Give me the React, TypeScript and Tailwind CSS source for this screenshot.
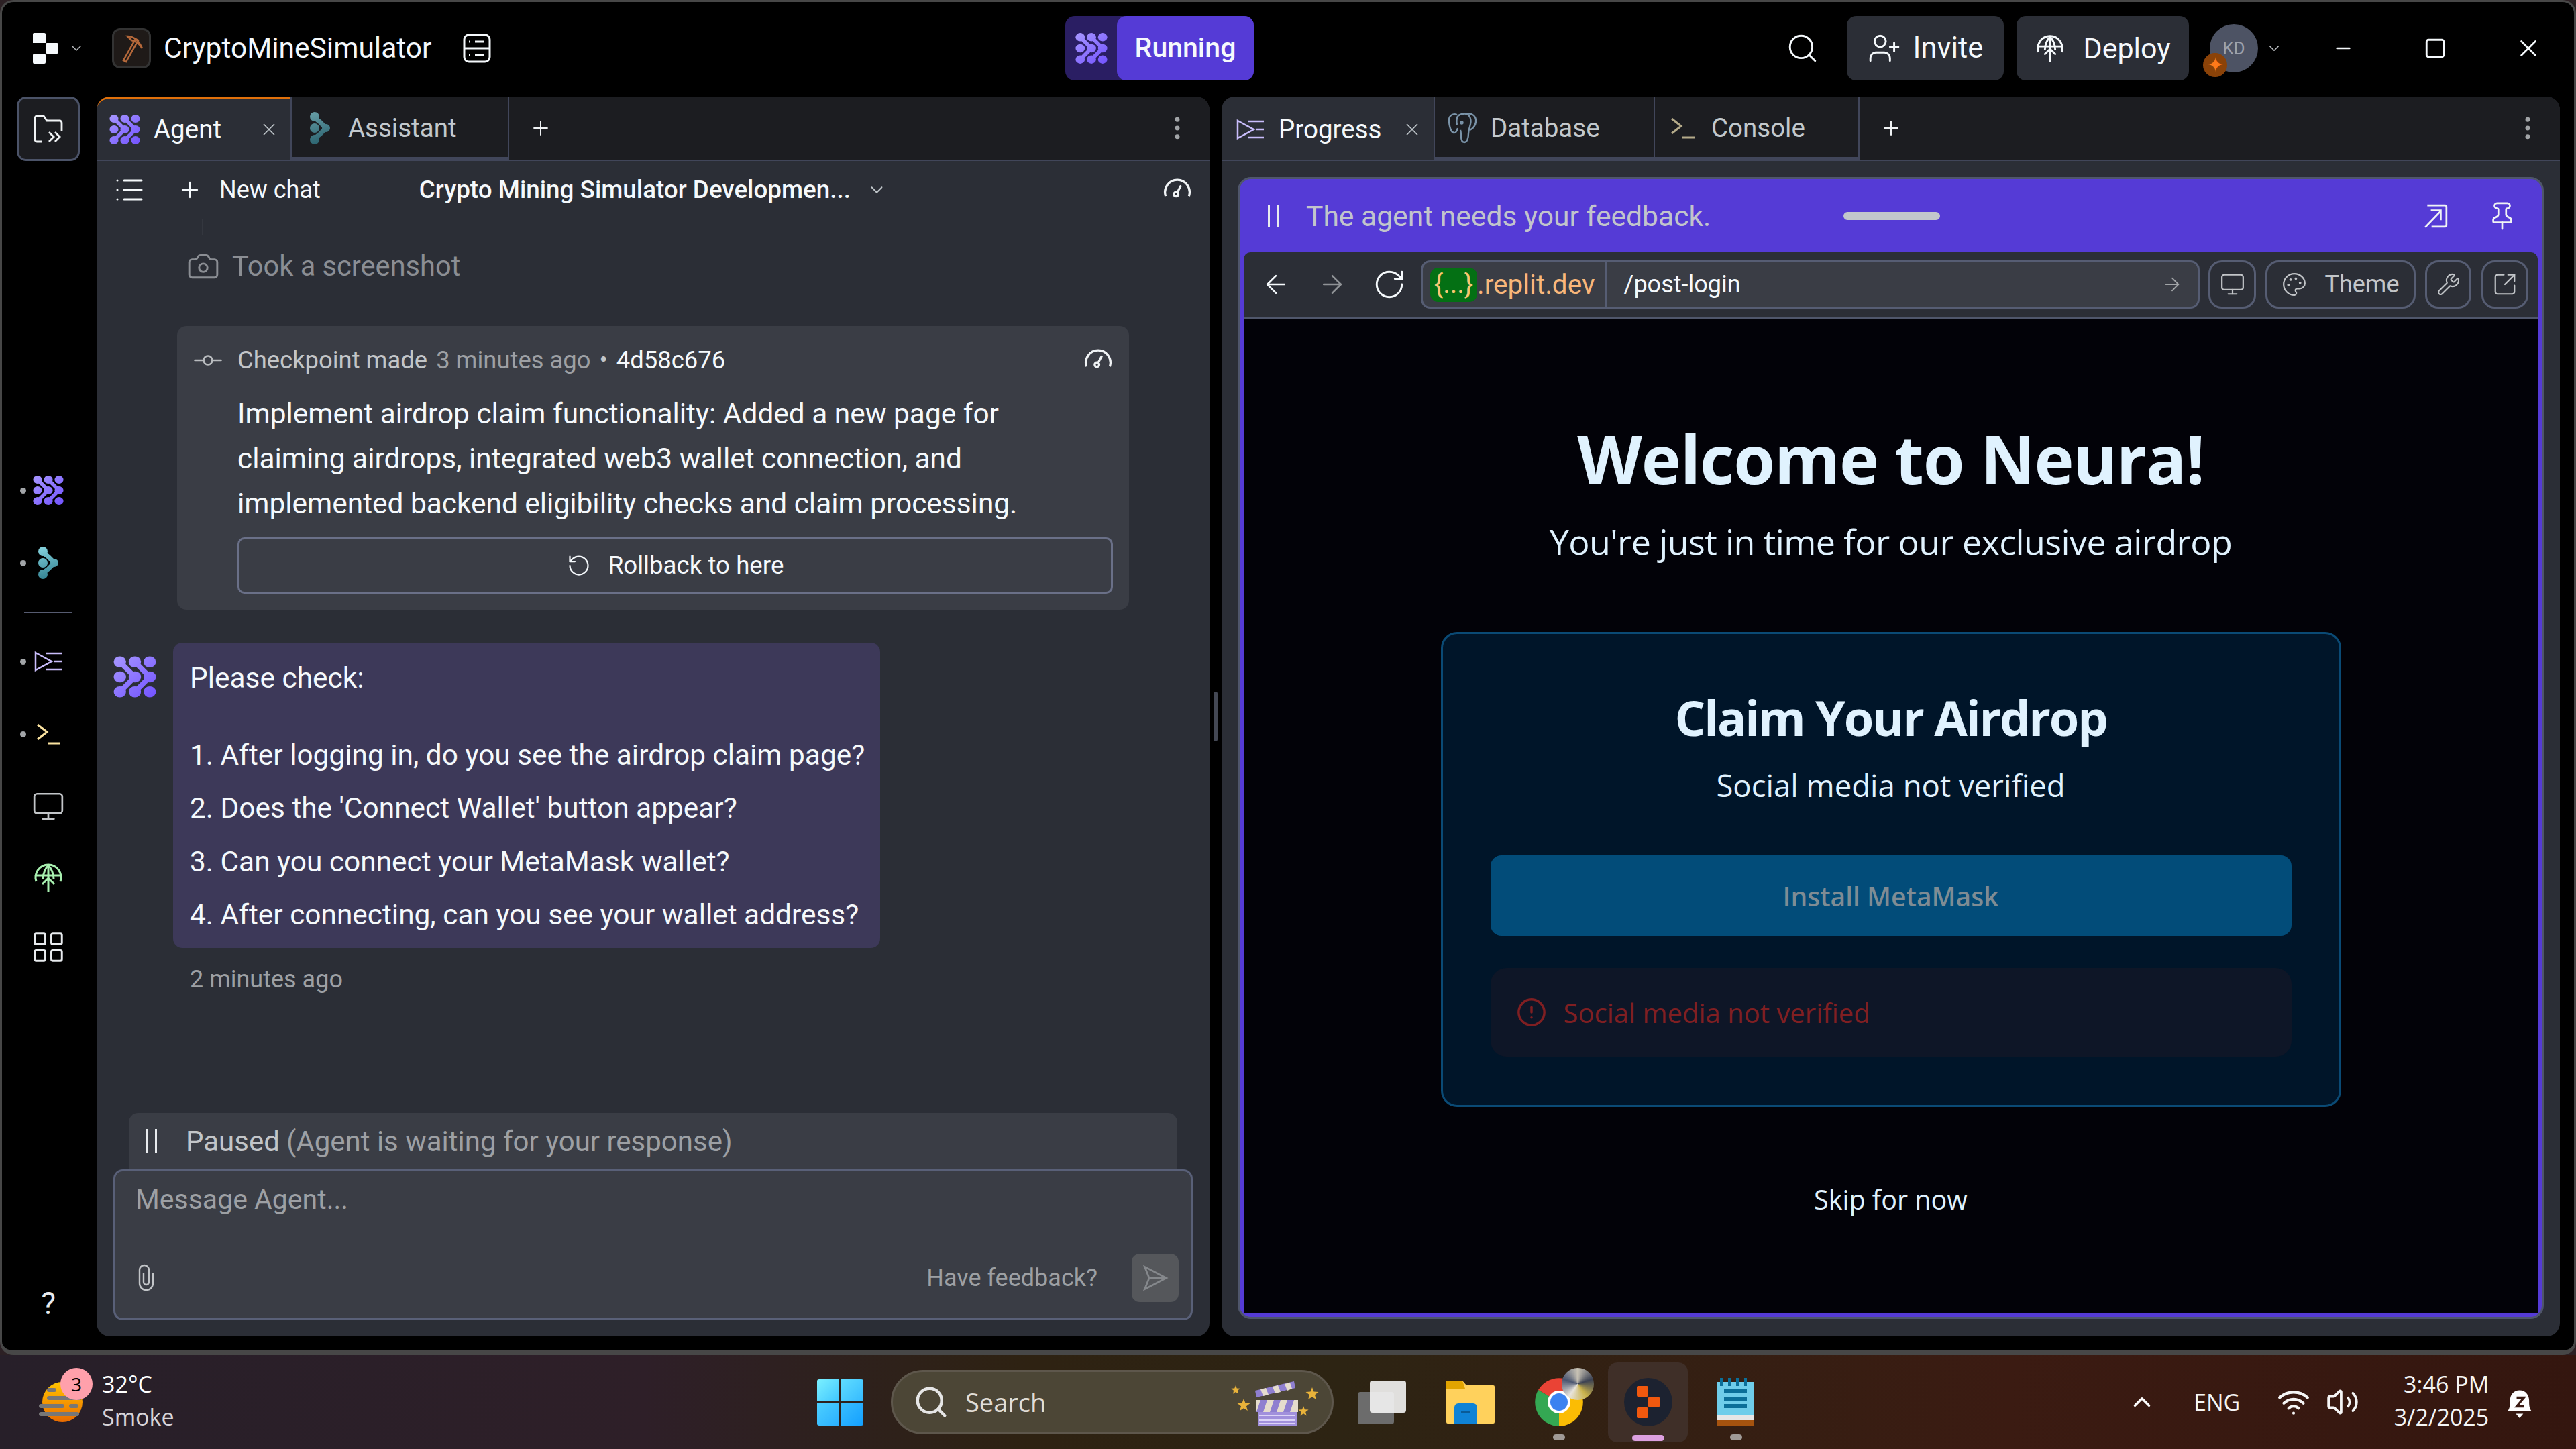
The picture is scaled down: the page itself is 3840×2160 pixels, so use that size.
import {
  ArrowLeft,
  ArrowRight,
  Camera,
  ChevronDown,
  ChevronUp,
  CircleAlert,
  EllipsisVertical,
  GitCommitHorizontal,
  List,
  Minus,
  Monitor,
  Palette,
  Plus,
  RotateCcw,
  RotateCw,
  Search,
  Square,
  SquareArrowOutUpRight,
  UserPlus,
  Volume2,
  Wifi,
  Wrench,
  X,
  Pin,
  LayoutGrid,
} from 'lucide-react';

function AgentLogo({ id, w, h }: { id: string; w: number; h: number }) {
  const grad = `url(#${id})`;
  return (
    <svg width={w} height={h} viewBox="0 0 46 46" preserveAspectRatio="none">
      <defs>
        <linearGradient id={id} gradientUnits="userSpaceOnUse" x1="5" y1="2" x2="42" y2="44">
          <stop offset="0" stopColor="#a493ff" />
          <stop offset="1" stopColor="#7556ff" />
        </linearGradient>
      </defs>
      <g fill={grad}>
        <ellipse cx="7" cy="7" rx="6.6" ry="6" />
        <ellipse cx="23" cy="7" rx="6.6" ry="6" />
        <ellipse cx="39" cy="7" rx="6.6" ry="6" />
        <ellipse cx="7" cy="23" rx="6.6" ry="6" />
        <ellipse cx="23" cy="23" rx="6.6" ry="6" />
        <ellipse cx="39" cy="23" rx="6.6" ry="6" />
        <ellipse cx="7" cy="39" rx="6.6" ry="6" />
        <ellipse cx="23" cy="39" rx="6.6" ry="6" />
        <ellipse cx="39" cy="39" rx="6.6" ry="6" />
      </g>
      <g fill="none" stroke={grad} strokeWidth="5.5">
        <path d="M7 7 L23 23 L7 39" />
        <path d="M23 7 L39 23 L23 39" />
      </g>
    </svg>
  );
}

function AssistantLogo({ id, w, h, dim }: { id: string; w: number; h: number; dim?: boolean }) {
  const grad = `url(#${id})`;
  return (
    <svg width={w} height={h} viewBox="0 0 30 48" className={dim ? 'opacity-70' : ''}>
      <defs>
        <linearGradient id={id} gradientUnits="userSpaceOnUse" x1="5" y1="0" x2="20" y2="48">
          <stop offset="0" stopColor="#86d3de" />
          <stop offset="1" stopColor="#2f7f8f" />
        </linearGradient>
      </defs>
      <circle cx="7" cy="7" r="7" fill={grad} />
      <circle cx="7" cy="41" r="7" fill={grad} />
      <circle cx="7" cy="24" r="7" fill={grad} />
      <circle cx="24" cy="24" r="6" fill={grad} />
      <path d="M7 7 Q10 12 15 15 L24 24 L15 33 Q10 36 7 41" fill="none" stroke={grad} strokeWidth="7" />
    </svg>
  );
}

function ProgressIcon({ w, h }: { w: number; h: number }) {
  return (
    <svg width={w} height={h} viewBox="0 0 42 30" fill="none" stroke="#c9bdfb" strokeWidth="2.5">
      <path d="M2 2 L26 15 L2 28 Z" />
      <path d="M18 3h23M30 15h11M18 27h23" />
    </svg>
  );
}

function ConsoleIcon({ w, h, color }: { w: number; h: number; color: string }) {
  return (
    <svg width={w} height={h} viewBox="0 0 36 32" fill="none" stroke={color} strokeWidth="3">
      <path d="M2 2 L16 13 L2 24" />
      <path d="M18 30h18" />
    </svg>
  );
}

function DeployIcon({ size, color }: { size: number; color: string }) {
  return (
    <svg width={size} height={size} viewBox="0 0 24 24" fill="none" stroke={color} strokeWidth="1.5">
      <path d="M3 15a9.5 9.5 0 1 1 18 0" />
      <path d="M3 10.5h18" />
      <path d="M8 13c0-4 2-8 4-10 2 2 4 6 4 10" />
      <path d="M12 3v20M7.5 17l4.5-4.5 4.5 4.5" />
    </svg>
  );
}

function Gauge({ size }: { size: number }) {
  return (
    <svg width={size} height={size} viewBox="0 0 24 24" fill="none" stroke="#f0f3f5" strokeWidth="1.8">
      <path d="M2.5 17a10 10 0 1 1 19 0" />
      <circle cx="11" cy="15.5" r="1.8" />
      <path d="M12 14l3-5.5" />
    </svg>
  );
}

function ReplitMark({ w, h }: { w: number; h: number }) {
  return (
    <svg width={w} height={h} viewBox="0 0 38 46" fill="#f5f9fc">
      <rect x="0" y="0" width="19" height="15" rx="2" />
      <rect x="19" y="15" width="19" height="16" rx="2" />
      <rect x="0" y="31" width="19" height="15" rx="2" />
      <rect x="0" y="14" width="19" height="1" />
    </svg>
  );
}

function FilesIcon() {
  return (
    <svg width="44" height="42" viewBox="0 0 44 42" fill="none" stroke="#f0f3f5" strokeWidth="2.8">
      <path d="M12 40H5a3 3 0 0 1-3-3V5a3 3 0 0 1 3-3h10l5 7h19a3 3 0 0 1 3 3v13" />
      <path d="M23 26l7 7-7 7M32 26l7 7-7 7" />
    </svg>
  );
}

function Elephant() {
  return (
    <svg width="48" height="48" viewBox="0 0 46 48" fill="none" stroke="#7a93a8" strokeWidth="2.4">
      <path d="M15 4C7 1 2 7 3 15c1 8 3 15 7 16 3 1 5-3 6-7" />
      <path d="M30 3c8-2 14 4 13 12-1 7-5 10-9 12" />
      <path d="M16 6c4-3 10-4 14-3 6 4 6 11 5 15-1 5-3 9-3 14 0 7-2 13-6 13-3 0-5-3-5-9 0-3 0-6-1-9" />
      <path d="M16 6c-2 5-2 9-1 13" />
      <circle cx="22" cy="16" r="1.5" />
    </svg>
  );
}

function PaperClip() {
  return (
    <svg width="32" height="44" viewBox="0 0 32 44" fill="none" stroke="#c2c5c8" strokeWidth="2.4">
      <path d="M12 14v14a4 4 0 0 0 8 0V10a7 7 0 0 0-14 0v20a10 10 0 0 0 20 0V14" />
    </svg>
  );
}

function SendPlane() {
  return (
    <svg width="40" height="40" viewBox="0 0 36 36" fill="none" stroke="#85888c" strokeWidth="2.4">
      <path d="M4 3 L33 18 L4 33 L10 18 Z" />
      <path d="M10 18h23" />
    </svg>
  );
}

function PopOut() {
  return (
    <svg width="38" height="38" viewBox="0 0 36 36" fill="none" stroke="#f0f3f5" strokeWidth="2.6">
      <path d="M6 3h25a2 2 0 0 1 2 2v26a2 2 0 0 1-2 2H12" />
      <path d="M3 34L25 11M11 10h14v14" />
    </svg>
  );
}

function Star({ x, y, r }: { x: number; y: number; r: number }) {
  const points = Array.from({ length: 10 }, (_, i) => {
    const a = (i * Math.PI) / 5 - Math.PI / 2;
    const rr = i % 2 === 0 ? r : r * 0.42;
    return `${x + rr * Math.cos(a)},${y + rr * Math.sin(a)}`;
  }).join(' ');
  return <polygon points={points} fill="#e8b23a" />;
}

function Clapper() {
  return (
    <svg width="136" height="70" viewBox="0 0 136 70">
      <Star x={7} y={17} r={7} />
      <Star x={19} y={40} r={10} />
      <Star x={121} y={23} r={10} />
      <Star x={108} y={49} r={8} />
      <path d="M36 18 L94 4 L96 14 L38 28 Z" fill="#8f7fd0" />
      <path d="M44 16 L52 14 L56 24 L48 26 Z M62 12 L70 10 L74 20 L66 22 Z M80 8 L88 6 L91 15 L84 18 Z" fill="#e5dccd" />
      <rect x="38" y="32" width="62" height="18" fill="#e5dccd" />
      <path d="M44 32h10l-6 18H38zM64 32h10l-6 18H58zM84 32h10l-6 18H78z" fill="#8f7fd0" />
      <rect x="40" y="50" width="58" height="20" fill="#a190dc" />
      <path d="M42 55h54M42 62h54M42 67h54" stroke="#efeaff" strokeWidth="1.5" />
    </svg>
  );
}

function Chrome() {
  return (
    <svg width="72" height="72" viewBox="0 0 72 72">
      <path d="M36 36 L5 18 A36 36 0 0 1 67 18 Z" fill="#ea4335" />
      <path d="M36 36 L5 18 A36 36 0 0 0 36 72 Z" fill="#34a853" />
      <path d="M36 36 L67 18 A36 36 0 0 1 36 72 Z" fill="#fbbc04" />
      <circle cx="36" cy="36" r="17" fill="#fff" />
      <circle cx="36" cy="36" r="13" fill="#3b82f0" />
    </svg>
  );
}

function Notepad() {
  return (
    <svg width="55" height="72" viewBox="0 0 55 72">
      <rect x="0" y="6" width="55" height="50" fill="#6fcdea" />
      <rect x="0" y="56" width="55" height="7" fill="#e6e6e6" />
      <rect x="0" y="63" width="55" height="9" fill="#a5530f" />
      <path d="M6 0v12M18 0v12M30 0v12M42 0v12" stroke="#0b6f99" strokeWidth="4" />
      <path d="M10 20h34M10 31h34M10 42h34" stroke="#0b6f99" strokeWidth="6" />
    </svg>
  );
}

function Folder() {
  return (
    <svg width="72" height="64" viewBox="0 0 72 64">
      <path d="M0 2a2 2 0 0 1 2-2h22l6 7h40a2 2 0 0 1 2 2v53a2 2 0 0 1-2 2H2a2 2 0 0 1-2-2z" fill="#ffd15c" />
      <path d="M0 2a2 2 0 0 1 2-2h22l4 12H0z" fill="#e2a400" />
      <path d="M12 40a6 6 0 0 1 6-6h22a6 6 0 0 1 6 6v24H12z" fill="#0f83d6" />
      <rect x="22" y="45" width="14" height="3" fill="#0a5b96" />
    </svg>
  );
}

function Tab({
  active,
  width,
  icon,
  label,
  labelMl,
  accent,
  iconMl,
}: {
  active?: boolean;
  width: string;
  icon: React.ReactNode;
  label: string;
  labelMl: string;
  accent?: boolean;
  iconMl: string;
}) {
  return (
    <div
      className={`flex h-full items-center ${width} ${
        active
          ? `bg-[#2b2e36] text-[#f5f9fc] ${accent ? 'rounded-tl-[20px] border-t-[3px] border-[#e0700a]' : 'rounded-tl-[20px] pt-[3px]'}`
          : 'border-b-[4px] border-l-[2px] border-[#41465a] pt-[4px] text-[#c2c8cc]'
      }`}
    >
      <div className={`flex shrink-0 items-center ${iconMl}`}>{icon}</div>
      <span className={`text-[38.5px] ${labelMl}`}>{label}</span>
      {active && <X size={30} strokeWidth={1.4} className="ml-auto mr-[17px] text-[#c2c8cc]" />}
    </div>
  );
}

function SideDot({ children, dot }: { children: React.ReactNode; dot?: boolean }) {
  return (
    <div className="relative flex h-[108px] w-full items-center justify-center">
      {dot && <div className="absolute left-[27px] h-[9px] w-[9px] rounded-full bg-[#a2a5a8]" />}
      {children}
    </div>
  );
}

function ToolButton({ width, children }: { width: string; children: React.ReactNode }) {
  return (
    <div className={`flex h-[72px] items-center justify-center rounded-[20px] border-[3px] border-[#565d73] ${width}`}>
      {children}
    </div>
  );
}

export default function App() {
  return (
    <div className="flex h-[2160px] w-[3840px] flex-col overflow-hidden bg-[#2c2024] font-[Roboto,sans-serif]">
      {/* app window */}
      <div className="flex h-[2020px] flex-col rounded-[20px] border-[3px] border-b-[7px] border-[#474747] bg-black">
        <header className="flex h-[141px] shrink-0 items-center pb-[3px] text-[#f5f9fc]">
          <div className="flex w-[1585px] items-center pl-[46px]">
            <ReplitMark w={38} h={46} />
            <ChevronDown size={24} strokeWidth={1.5} className="ml-[15px] text-[#b5b8bb]" />
            <div className="ml-[41px] flex h-[60px] w-[58px] items-center justify-center rounded-[12px] border-[3px] border-[#333] bg-[#1f1a18]">
              <svg width="36" height="44" viewBox="0 0 36 44" fill="none" stroke="#b5683a" strokeWidth="2.5">
                <path d="M6 40 L24 8 L28 10 L10 42 Z" />
                <path d="M12 4 Q26 4 34 22 Q28 12 18 10 Z" />
              </svg>
            </div>
            <span className="ml-[19px] text-[42.5px]">CryptoMineSimulator</span>
            <svg width="42" height="44" viewBox="0 0 42 44" fill="none" stroke="#f5f9fc" strokeWidth="3" className="ml-[47px]">
              <rect x="2" y="2" width="38" height="40" rx="7" />
              <path d="M2 22h38M18 12h14M18 32h14M9 12h2M9 32h2" />
            </svg>
          </div>
          <div className="flex h-[96px] w-[281px] items-center rounded-[14px] bg-[#2a1e63]">
            <div className="flex w-[77px] justify-center">
              <AgentLogo id="run-agent" w={48} h={48} />
            </div>
            <div className="flex h-full flex-1 items-center justify-center rounded-[14px] bg-[#553bd6] text-[41px] font-medium">
              Running
            </div>
          </div>
          <div className="flex flex-1 items-center justify-end pr-[47px]">
            <Search size={50} strokeWidth={1.4} />
            <div className="ml-[41px] flex h-[96px] w-[234px] items-center justify-center gap-[18px] rounded-[14px] bg-[#2b2e36] text-[43.5px]">
              <UserPlus size={50} strokeWidth={1.4} />
              Invite
            </div>
            <div className="ml-[19px] flex h-[96px] w-[257px] items-center justify-center gap-[26px] rounded-[14px] bg-[#2b2e36] text-[43px]">
              <DeployIcon size={46} color="#f5f9fc" />
              Deploy
            </div>
            <div className="relative ml-[31px] flex h-[72px] w-[72px] items-center justify-center rounded-full bg-[#4d5364] text-[26px] text-[#9da2ad]">
              KD
              <div className="absolute bottom-[-7px] left-[-10px] flex h-[36px] w-[36px] items-center justify-center rounded-full bg-[#8a4208] text-[30px] leading-none text-[#ff7a1a]">
                ✦
              </div>
            </div>
            <ChevronDown size={26} strokeWidth={1.5} className="ml-[11px] text-[#b5b8bb]" />
            <Minus size={32} strokeWidth={2} className="ml-[74px]" />
            <Square size={34} strokeWidth={2} className="ml-[104px]" />
            <X size={42} strokeWidth={1.5} className="ml-[101px]" />
          </div>
        </header>

        <div className="flex min-h-0 flex-1 pb-[21px] pr-[21px]">
          {/* sidebar */}
          <aside className="flex h-full w-[141px] shrink-0 flex-col items-center pr-[3px]">
            <div className="flex h-[96px] w-[94px] items-center justify-center rounded-[14px] border-[3px] border-[#4b5368] bg-[#1c1d21]">
              <FilesIcon />
            </div>
            <div className="mt-[437px] w-full">
              <SideDot dot>
                <AgentLogo id="side-agent" w={46} h={46} />
              </SideDot>
              <SideDot dot>
                <AssistantLogo id="side-assistant" w={30} h={48} />
              </SideDot>
              <div className="mx-auto mb-[18px] mt-[19px] h-[2px] w-[72px] bg-[#565b70]" />
              <SideDot dot>
                <ProgressIcon w={42} h={30} />
              </SideDot>
              <SideDot dot>
                <ConsoleIcon w={36} h={32} color="#fbe3a0" />
              </SideDot>
              <SideDot>
                <Monitor size={50} strokeWidth={1.3} className="text-[#c2c5c8]" />
              </SideDot>
              <div className="-mt-[2px]">
                <SideDot>
                  <DeployIcon size={48} color="#a8f0b0" />
                </SideDot>
              </div>
              <div className="-mt-[4px]">
                <SideDot>
                  <LayoutGrid size={54} strokeWidth={1.3} className="text-[#e8ebee]" />
                </SideDot>
              </div>
            </div>
            <div className="mt-auto pb-[14px] text-[46px] text-[#e8ebee]">?</div>
          </aside>

          {/* agent panel */}
          <section className="flex h-full w-[1659px] shrink-0 flex-col rounded-[20px] bg-[#2b2e36]">
            <div className="flex h-[96px] shrink-0 items-center rounded-t-[20px] border-b-[2px] border-[#41465a] bg-[#1c1d21]">
              <Tab
                active
                accent
                width="w-[289px]"
                iconMl="ml-[19px]"
                icon={<AgentLogo id="tab-agent" w={46} h={46} />}
                label="Agent"
                labelMl="ml-[20px]"
              />
              <Tab
                width="w-[324px]"
                iconMl="ml-[27px]"
                icon={<AssistantLogo id="tab-assistant" w={30} h={48} dim />}
                label="Assistant"
                labelMl="ml-[27px]"
              />
              <div className="flex h-full items-center border-l-[2px] border-[#41465a] pl-[30px]">
                <Plus size={34} strokeWidth={1.4} className="text-[#f0f3f5]" />
              </div>
              <EllipsisVertical size={44} strokeWidth={1.8} className="ml-auto mr-[26px] text-[#a2a5a8]" />
            </div>

            <div className="flex h-[86px] shrink-0 items-center text-[#f5f9fc]">
              <List size={48} strokeWidth={1.5} className="ml-[25px]" />
              <Plus size={38} strokeWidth={1.4} className="ml-[47px]" />
              <span className="ml-[25px] text-[36px]">New chat</span>
              <span className="ml-[147px] text-[36.8px] font-medium">Crypto Mining Simulator Developmen...</span>
              <ChevronDown size={30} strokeWidth={1.5} className="ml-[24px] text-[#c2c8cc]" />
              <div className="ml-auto mr-[26px]">
                <Gauge size={44} />
              </div>
            </div>

            <div className="ml-[157px] h-[24px] w-[2px] bg-[#34373f]" />
            <div className="ml-[134px] mt-[17px] flex h-[60px] shrink-0 items-center text-[#8b8e94]">
              <Camera size={50} strokeWidth={1.4} />
              <span className="ml-[18px] text-[41.6px]">Took a screenshot</span>
            </div>

            <div className="ml-[120px] mt-[59px] w-[1419px] shrink-0 rounded-[14px] bg-[#3a3d45] pb-[24px] pl-[20px] pr-[24px] pt-[26px]">
              <div className="flex h-[50px] items-center text-[36.4px]">
                <GitCommitHorizontal size={52} strokeWidth={1.2} className="text-[#b9bcbf]" />
                <span className="ml-[18px] text-[#c2c5c8]">Checkpoint made</span>
                <span className="ml-[13px] text-[#9da0a4]">3 minutes ago</span>
                <span className="mx-[13px] text-[#c2c5c8]">•</span>
                <span className="text-[#f5f9fc]">4d58c676</span>
                <div className="ml-auto">
                  <Gauge size={44} />
                </div>
              </div>
              <div className="ml-[70px] mt-[21px] whitespace-nowrap text-[42.4px] leading-[67px] text-[#f5f9fc]">
                <p>Implement airdrop claim functionality: Added a new page for</p>
                <p>claiming airdrops, integrated web3 wallet connection, and</p>
                <p>implemented backend eligibility checks and claim processing.</p>
              </div>
              <div className="ml-[70px] mt-[17px] flex h-[84px] items-center justify-center gap-[26px] rounded-[10px] border-[3px] border-[#6a7088] text-[36.7px] text-[#f5f9fc]">
                <RotateCcw size={36} strokeWidth={1.5} />
                Rollback to here
              </div>
            </div>

            <div className="ml-[25px] mt-[49px] flex shrink-0">
              <div className="mt-[19px]">
                <AgentLogo id="msg-agent" w={64} h={64} />
              </div>
              <div className="ml-[25px] w-[1054px] whitespace-nowrap rounded-[14px] bg-[#3d3959] px-[25px] pb-[9px] pt-[13px] text-[42.4px] leading-[79.5px] text-[#f5f9fc]">
                <p>Please check:</p>
                <p className="mt-[35px]">1. After logging in, do you see the airdrop claim page?</p>
                <p>2. Does the 'Connect Wallet' button appear?</p>
                <p>3. Can you connect your MetaMask wallet?</p>
                <p>4. After connecting, can you see your wallet address?</p>
              </div>
            </div>
            <div className="ml-[139px] mt-[22px] h-[50px] shrink-0 text-[36px] leading-[50px] text-[#9da0a4]">2 minutes ago</div>

            <div className="mx-[48px] mt-auto flex h-[84px] shrink-0 items-center rounded-t-[14px] bg-[#3a3d45] text-[42px]">
              <div className="ml-[26px] flex gap-[10px]">
                <div className="h-[36px] w-[3px] bg-[#e8ebee]" />
                <div className="h-[36px] w-[3px] bg-[#e8ebee]" />
              </div>
              <span className="ml-[43px] text-[#c2c5c8]">Paused</span>
              <span className="ml-[10px] text-[#9da0a4]">(Agent is waiting for your response)</span>
            </div>
            <div className="mx-[25px] mb-[24px] flex h-[225px] shrink-0 flex-col rounded-[14px] border-[3px] border-[#596078] bg-[#3a3d45] pl-[30px] pr-[18px] pt-[17px]">
              <div className="h-[50px] text-[41px] leading-[50px] text-[#9da0a4]">Message Agent...</div>
              <div className="mt-[56px] flex h-[72px] items-center">
                <PaperClip />
                <span className="ml-auto text-[36px] text-[#9da0a4]">Have feedback?</span>
                <div className="ml-[51px] flex h-[72px] w-[70px] items-center justify-center rounded-[12px] bg-[#55575b]">
                  <SendPlane />
                </div>
              </div>
            </div>
          </section>

          {/* splitter */}
          <div className="flex h-full w-[18px] shrink-0 items-center justify-center">
            <div className="h-[74px] w-[6px] rounded-full bg-[#444854]" />
          </div>

          {/* preview panel */}
          <section className="flex h-full flex-1 flex-col rounded-[20px] bg-[#2b2e36]">
            <div className="flex h-[96px] shrink-0 items-center rounded-t-[20px] border-b-[2px] border-[#41465a] bg-[#1c1d21]">
              <Tab active width="w-[316px]" iconMl="ml-[22px]" icon={<ProgressIcon w={42} h={30} />} label="Progress" labelMl="ml-[21px]" />
              <Tab width="w-[328px]" iconMl="ml-[17px]" icon={<Elephant />} label="Database" labelMl="ml-[18px]" />
              <Tab width="w-[305px]" iconMl="ml-[23px]" icon={<ConsoleIcon w={36} h={32} color="#b5ab8a" />} label="Console" labelMl="ml-[25px]" />
              <div className="flex h-full items-center border-l-[2px] border-[#41465a] pl-[30px]">
                <Plus size={34} strokeWidth={1.4} className="text-[#f0f3f5]" />
              </div>
              <EllipsisVertical size={44} strokeWidth={1.8} className="ml-auto mr-[26px] text-[#a2a5a8]" />
            </div>

            <div className="mx-[24px] mb-[26px] mt-[24px] flex min-h-0 flex-1 flex-col overflow-hidden rounded-[20px] border-[3px] border-[#4f566b] bg-[#553bd6] px-[6px] pb-[6px]">
              <div className="flex h-[109px] shrink-0 items-center">
                <div className="ml-[36px] flex gap-[10px]">
                  <div className="h-[34px] w-[3px] bg-[#e8ebee]" />
                  <div className="h-[34px] w-[3px] bg-[#e8ebee]" />
                </div>
                <span className="ml-[41px] mt-[2px] w-[801px] text-[42.6px] text-[#c2c4cc]">The agent needs your feedback.</span>
                <div className="h-[12px] w-[144px] rounded-full bg-[#c2c6cc]" />
                <div className="ml-auto">
                  <PopOut />
                </div>
                <Pin size={46} strokeWidth={1.4} className="ml-[57px] mr-[30px] text-[#f0f3f5]" />
              </div>

              <div className="flex h-[99px] shrink-0 items-center rounded-t-[10px] border-b-[3px] border-[#4f566b] bg-[#2b2e36]">
                <ArrowLeft size={44} strokeWidth={1.4} className="ml-[26px] text-[#f5f9fc]" />
                <ArrowRight size={44} strokeWidth={1.4} className="ml-[40px] text-[#8f9296]" />
                <RotateCw size={50} strokeWidth={1.4} className="ml-[38px] text-[#f5f9fc]" />
                <div className="ml-[22px] flex h-[72px] w-[1161px] items-center rounded-[14px] border-[3px] border-[#565d73] bg-[#3a3d45] pl-[11px] pr-[22px] text-[36px]">
                  <div className="flex h-[51px] w-[70px] items-center justify-center rounded-[12px] bg-[#047014] text-[40px] text-[#f7c873]">{'{...}'}</div>
                  <span className="text-[40.5px] text-[#f9b77a]">.replit.dev</span>
                  <div className="ml-[15px] h-full w-[3px] bg-[#565d73]" />
                  <span className="ml-[25px] text-[#f5f9fc]">/post-login</span>
                  <ArrowRight size={32} strokeWidth={1.4} className="ml-auto text-[#a2a5a8]" />
                </div>
                <div className="ml-[13px]">
                  <ToolButton width="w-[71px]">
                    <Monitor size={38} strokeWidth={1.4} className="text-[#c2c5c8]" />
                  </ToolButton>
                </div>
                <div className="ml-[14px]">
                  <ToolButton width="w-[224px]">
                    <Palette size={38} strokeWidth={1.4} className="text-[#c2c5c8]" />
                    <span className="ml-[26px] text-[36px] text-[#c2c5c8]">Theme</span>
                  </ToolButton>
                </div>
                <div className="ml-[14px]">
                  <ToolButton width="w-[69px]">
                    <Wrench size={36} strokeWidth={1.4} className="text-[#c2c5c8]" />
                  </ToolButton>
                </div>
                <div className="ml-[15px]">
                  <ToolButton width="w-[70px]">
                    <SquareArrowOutUpRight size={38} strokeWidth={1.4} className="text-[#c2c5c8]" />
                  </ToolButton>
                </div>
              </div>

              <div className="flex min-h-0 flex-1 flex-col items-center bg-[#020208] pt-[148px] font-['Open_Sans',sans-serif] text-[#e0f2fe]">
                <h1 className="text-[100px] font-bold leading-[120px] tracking-[-1.2px]">Welcome to Neura!</h1>
                <p className="mt-[30px] text-[52px] leading-[68px] tracking-[-0.6px]">You're just in time for our exclusive airdrop</p>
                <div className="mt-[101px] flex h-[708px] w-[1342px] shrink-0 flex-col items-center rounded-[24px] border-[3px] border-[#0a4a75] bg-[#001529] pt-[80px]">
                  <h2 className="text-[72px] font-bold leading-[88px] tracking-[-2.2px]">Claim Your Airdrop</h2>
                  <p className="mt-[27px] text-[45.5px] leading-[60px]">Social media not verified</p>
                  <div className="mt-[75px] flex h-[120px] w-[1194px] items-center justify-center rounded-[16px] bg-[#024c79] pt-[2px] text-[39px] font-semibold text-[#7f8c94]">
                    Install MetaMask
                  </div>
                  <div className="mt-[48px] flex h-[132px] w-[1194px] items-center rounded-[24px] bg-[#0e1627] pl-[38px] text-[#801f22]">
                    <CircleAlert size={46} strokeWidth={1.8} />
                    <span className="ml-[25px] mt-[2px] text-[40px]">Social media not verified</span>
                  </div>
                </div>
                <div className="mt-[108px] text-[39.5px] leading-[60px]">Skip for now</div>
              </div>
            </div>
          </section>
        </div>
      </div>

      {/* taskbar */}
      <footer className="flex h-[140px] items-center bg-[linear-gradient(90deg,#271f29_0%,#2e1f28_25%,#2e2212_40%,#2d2413_52%,#3b1b12_78%,#34160f_100%)] font-['Open_Sans',sans-serif] text-[#f5f5f5]">
        <div className="flex w-[1218px] shrink-0 items-center pl-[58px]">
          <div className="relative h-[60px] w-[64px]">
            <div className="ml-[5px] h-[60px] w-[60px] rounded-full bg-gradient-to-b from-[#ffc400] to-[#e86a00]" />
            <div className="absolute left-[12px] top-[9px] h-[6px] w-[14px] rounded-full bg-[#777]" />
            <div className="absolute left-[12px] top-[21px] h-[6px] w-[52px] rounded-full bg-[#777]" />
            <div className="absolute left-0 top-[33px] h-[6px] w-[38px] rounded-full bg-[#777]" />
            <div className="absolute left-[45px] top-[33px] h-[6px] w-[14px] rounded-full bg-[#777]" />
            <div className="absolute left-0 top-[45px] h-[6px] w-[60px] rounded-full bg-[#777]" />
            <div className="absolute left-[32px] top-[-21px] flex h-[48px] w-[48px] items-center justify-center rounded-full bg-[#ffa0ab] text-[28px] text-black">
              3
            </div>
          </div>
          <div className="-mt-[4px] ml-[30px] leading-[49px]">
            <div className="text-[34px] text-white">32°C</div>
            <div className="text-[34px] text-[#d8d4d8]">Smoke</div>
          </div>
        </div>

        <div className="grid h-[69px] w-[69px] shrink-0 grid-cols-2 gap-[3px] overflow-hidden rounded-[3px]">
          <div className="bg-gradient-to-br from-[#7af0ff] to-[#3ec6ff]" />
          <div className="bg-gradient-to-br from-[#5fdcff] to-[#34baff]" />
          <div className="bg-gradient-to-br from-[#4ccfff] to-[#2ab0ff]" />
          <div className="bg-gradient-to-br from-[#36bcff] to-[#12a0ff]" />
        </div>

        <div className="ml-[41px] flex h-[96px] w-[660px] shrink-0 items-center rounded-full border-[3px] border-[#5e574c] bg-[#4c4636] pl-[30px]">
          <Search size={54} strokeWidth={2} className="text-[#e6e6e6]" />
          <span className="ml-[24px] text-[38px] text-[#e0ddd6]">Search</span>
          <div className="ml-auto mr-[14px]">
            <Clapper />
          </div>
        </div>

        <div className="relative ml-[36px] h-[65px] w-[72px] shrink-0">
          <div className="absolute left-0 top-[17px] h-[48px] w-[54px] rounded-[4px] bg-[#6c6c6c]" />
          <div className="absolute left-[18px] top-0 h-[48px] w-[54px] rounded-[4px] bg-[#f4f4f4] opacity-90" />
        </div>
        <div className="ml-[60px] shrink-0">
          <Folder />
        </div>
        <div className="relative ml-[60px] flex shrink-0 flex-col items-center">
          <Chrome />
          <div className="absolute right-[-16px] top-[-15px] h-[48px] w-[48px] rounded-full bg-[conic-gradient(#c9c3b5,#3b4152,#c8b04a,#e8e4dc,#4a5570,#c9c3b5)]" />
          <div className="absolute bottom-[-21px] h-[9px] w-[18px] rounded-full bg-[#a09a96]" />
        </div>
        <div className="relative ml-[37px] flex h-[119px] w-[119px] shrink-0 items-center justify-center rounded-[14px] bg-[#3f2f28]">
          <div className="flex h-[72px] w-[72px] items-center justify-center rounded-full bg-[#1c2230]">
            <svg width="34" height="48" viewBox="0 0 34 48" fill="#f0580e">
              <rect x="0" y="0" width="17" height="16" rx="2" />
              <rect x="17" y="16" width="17" height="16" rx="2" />
              <rect x="0" y="32" width="17" height="16" rx="2" />
            </svg>
          </div>
          <div className="absolute bottom-[2px] h-[9px] w-[48px] rounded-full bg-[#dca0e0]" />
        </div>
        <div className="relative ml-[44px] flex shrink-0 flex-col items-center">
          <Notepad />
          <div className="absolute bottom-[-21px] h-[9px] w-[18px] rounded-full bg-[#a09a96]" />
        </div>

        <ChevronUp size={42} strokeWidth={2} className="ml-[557px] shrink-0 text-white" />
        <span className="ml-[56px] text-[34px]">ENG</span>
        <Wifi size={50} strokeWidth={2} className="ml-[55px] shrink-0" />
        <Volume2 size={50} strokeWidth={1.8} className="ml-[23px] shrink-0" />
        <div className="-mt-[4px] ml-[45px] w-[148px] shrink-0 whitespace-nowrap text-right text-[34px] leading-[49px]">
          <div>3:46 PM</div>
          <div>3/2/2025</div>
        </div>
        <svg width="46" height="54" viewBox="0 0 42 48" fill="#fff" className="ml-[24px] shrink-0">
          <path d="M4 36c3-4 3-8 3-14 0-8 5-14 13-14s13 6 13 14c0 6 0 10 3 14z" />
          <path d="M15 40h10l-5 6z" />
          <path d="M16 18h10l-10 12h10" fill="none" stroke="#3a1a12" strokeWidth="3" />
        </svg>
      </footer>
    </div>
  );
}
